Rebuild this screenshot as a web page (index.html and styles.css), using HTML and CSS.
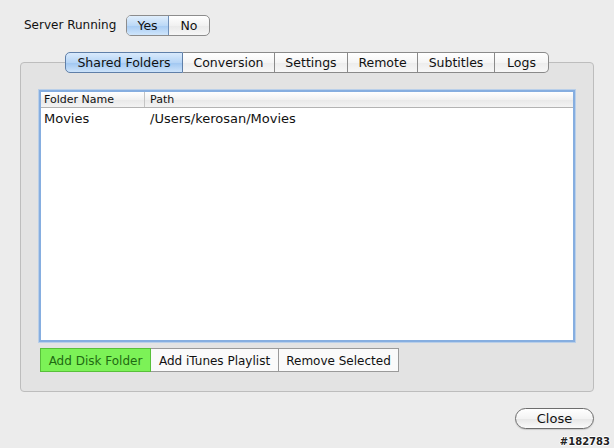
FILE: index.html
```html
<!DOCTYPE html>
<html lang="en">
<head>
    <meta charset="UTF-8">
    <title>Server Preferences</title>
    <link rel="stylesheet" href="styles.css">
</head>
<body>
    <div id="window">
        <!-- server state -->
        <div id="server_row">
            <span class="label">Server Running</span>
            <div class="seg">
                <button class="seg_btn on">Yes</button>
                <button class="seg_btn">No</button>
            </div>
        </div>

        <!-- tab box -->
        <div id="group">
            <div id="tabs">
                <button class="tab on">Shared Folders</button>
                <button class="tab">Conversion</button>
                <button class="tab">Settings</button>
                <button class="tab">Remote</button>
                <button class="tab">Subtitles</button>
                <button class="tab">Logs</button>
            </div>

            <div id="table_wrap">
                <div class="row head">
                    <div class="col name">Folder Name</div>
                    <div class="col path">Path</div>
                </div>
                <div class="row">
                    <div class="col name">Movies</div>
                    <div class="col path">/Users/kerosan/Movies</div>
                </div>
            </div>

            <div id="actions">
                <button class="act green">Add Disk Folder</button>
                <button class="act">Add iTunes Playlist</button>
                <button class="act">Remove Selected</button>
            </div>
        </div>

        <div id="footer">
            <button id="close">Close</button>
        </div>

        <div id="stamp">#182783</div>
    </div>
</body>
</html>
```

FILE: styles.css
```css
* {
    box-sizing: border-box;
    margin: 0;
}

body {
    background-color: #ececec;
    font-family: "DejaVu Sans", "Liberation Sans", sans-serif;
    font-size: 12px;
    color: #111;
}

button {
    font-family: inherit;
    font-size: 12.5px;
    color: #111;
    cursor: pointer;
}

#window {
    position: relative;
    width: 614px;
    height: 448px;
    overflow: hidden;
}

#server_row {
    display: flex;
    align-items: center;
    padding: 15px 0 0 24px;
    height: 36px;
}

.label {
    width: 102px;
    margin-top: -1px;
}

.seg {
    display: flex;
    height: 21px;
    border: 1px solid #8c8c8c;
    border-radius: 5px;
    overflow: hidden;
    background: linear-gradient(#ffffff, #f1f1f1 50%, #e9e9e9 51%, #f6f6f6);
}

.seg_btn {
    border: 0;
    background: transparent;
    padding: 0;
    height: 19px;
    width: 40px;
}

.seg_btn.on {
    width: 42px;
    border-right: 1px solid #6f8fb8;
    background: linear-gradient(#e0eefc, #bcd9f7 50%, #a6cbf3 51%, #cfe5fb);
}

#group {
    margin: 26px 0 0 20px;
    width: 574px;
    height: 330px;
    background-color: #e3e3e3;
    border: 1px solid #bdbdbd;
    border-radius: 4px;
}

#tabs {
    display: flex;
    justify-content: center;
    margin: -11px 0 0 0;
}

.tab {
    height: 21px;
    padding: 0;
    border: 1px solid #8a8a8a;
    border-left: 0;
    background: linear-gradient(#ffffff, #f5f5f5 50%, #ececec 51%, #f7f7f7);
}

.tab:first-child {
    border-left: 1px solid #5f7fa8;
    border-radius: 5px 0 0 5px;
}

.tab:last-child {
    border-radius: 0 5px 5px 0;
}

.tab:nth-child(1) { width: 118px; }
.tab:nth-child(2) { width: 92px; }
.tab:nth-child(3) { width: 73px; }
.tab:nth-child(4) { width: 70px; }
.tab:nth-child(5) { width: 77px; }
.tab:nth-child(6) { width: 54px; }

.tab.on {
    border-color: #5f7fa8;
    background: linear-gradient(#d9eafc, #b6d5f6 50%, #9fc6f1 51%, #cde3fa);
}

#table_wrap {
    margin: 17px 0 0 18px;
    width: 536px;
    height: 252px;
    background-color: #ffffff;
    border: 2px solid #86aee0;
    box-shadow: 0 0 0 1px #b9cfe9;
}

.row {
    display: flex;
    height: 21px;
    align-items: center;
    font-size: 13px;
}

.row.head {
    height: 16px;
    font-size: 11px;
    background: linear-gradient(#ffffff, #f1f1f1 50%, #e8e8e8 51%, #f3f3f3);
    border-bottom: 1px solid #b3b3b3;
}

.col {
    padding-left: 3px;
    white-space: nowrap;
}

.col.name {
    width: 104px;
}

.head .col.name {
    height: 15px;
    line-height: 15px;
    border-right: 1px solid #c4c4c4;
}

.head .col.path,
.row .col.path {
    padding-left: 5px;
}

#actions {
    display: flex;
    margin: 6px 0 0 19px;
}

.act {
    height: 24px;
    padding: 1px 0 0 0;
    font-size: 12px;
    background-color: #fafafa;
    border: 1px solid #9a9a9a;
    border-left: 0;
}

.act:nth-child(1) { width: 111px; }
.act:nth-child(2) { width: 128px; }
.act:nth-child(3) { width: 120px; }

.act.green {
    background-color: #7cf257;
    border: 1px solid #58c03a;
    color: #1f6a12;
}

#footer {
    display: flex;
    justify-content: flex-end;
    padding: 16px 20px 0 0;
}

#close {
    width: 79px;
    height: 21px;
    padding: 0;
    font-size: 13px;
    border: 1px solid #6d6d6d;
    border-radius: 11px;
    background: linear-gradient(#ffffff, #f3f3f3 50%, #e6e6e6 51%, #fafafa);
    box-shadow: 0 1px 1px rgba(0, 0, 0, 0.15);
}

#stamp {
    position: absolute;
    right: 4px;
    bottom: 1px;
    font-size: 10px;
    font-weight: bold;
    color: #222;
    text-shadow: 1px 0 #fff, -1px 0 #fff, 0 1px #fff, 0 -1px #fff;
}
```
